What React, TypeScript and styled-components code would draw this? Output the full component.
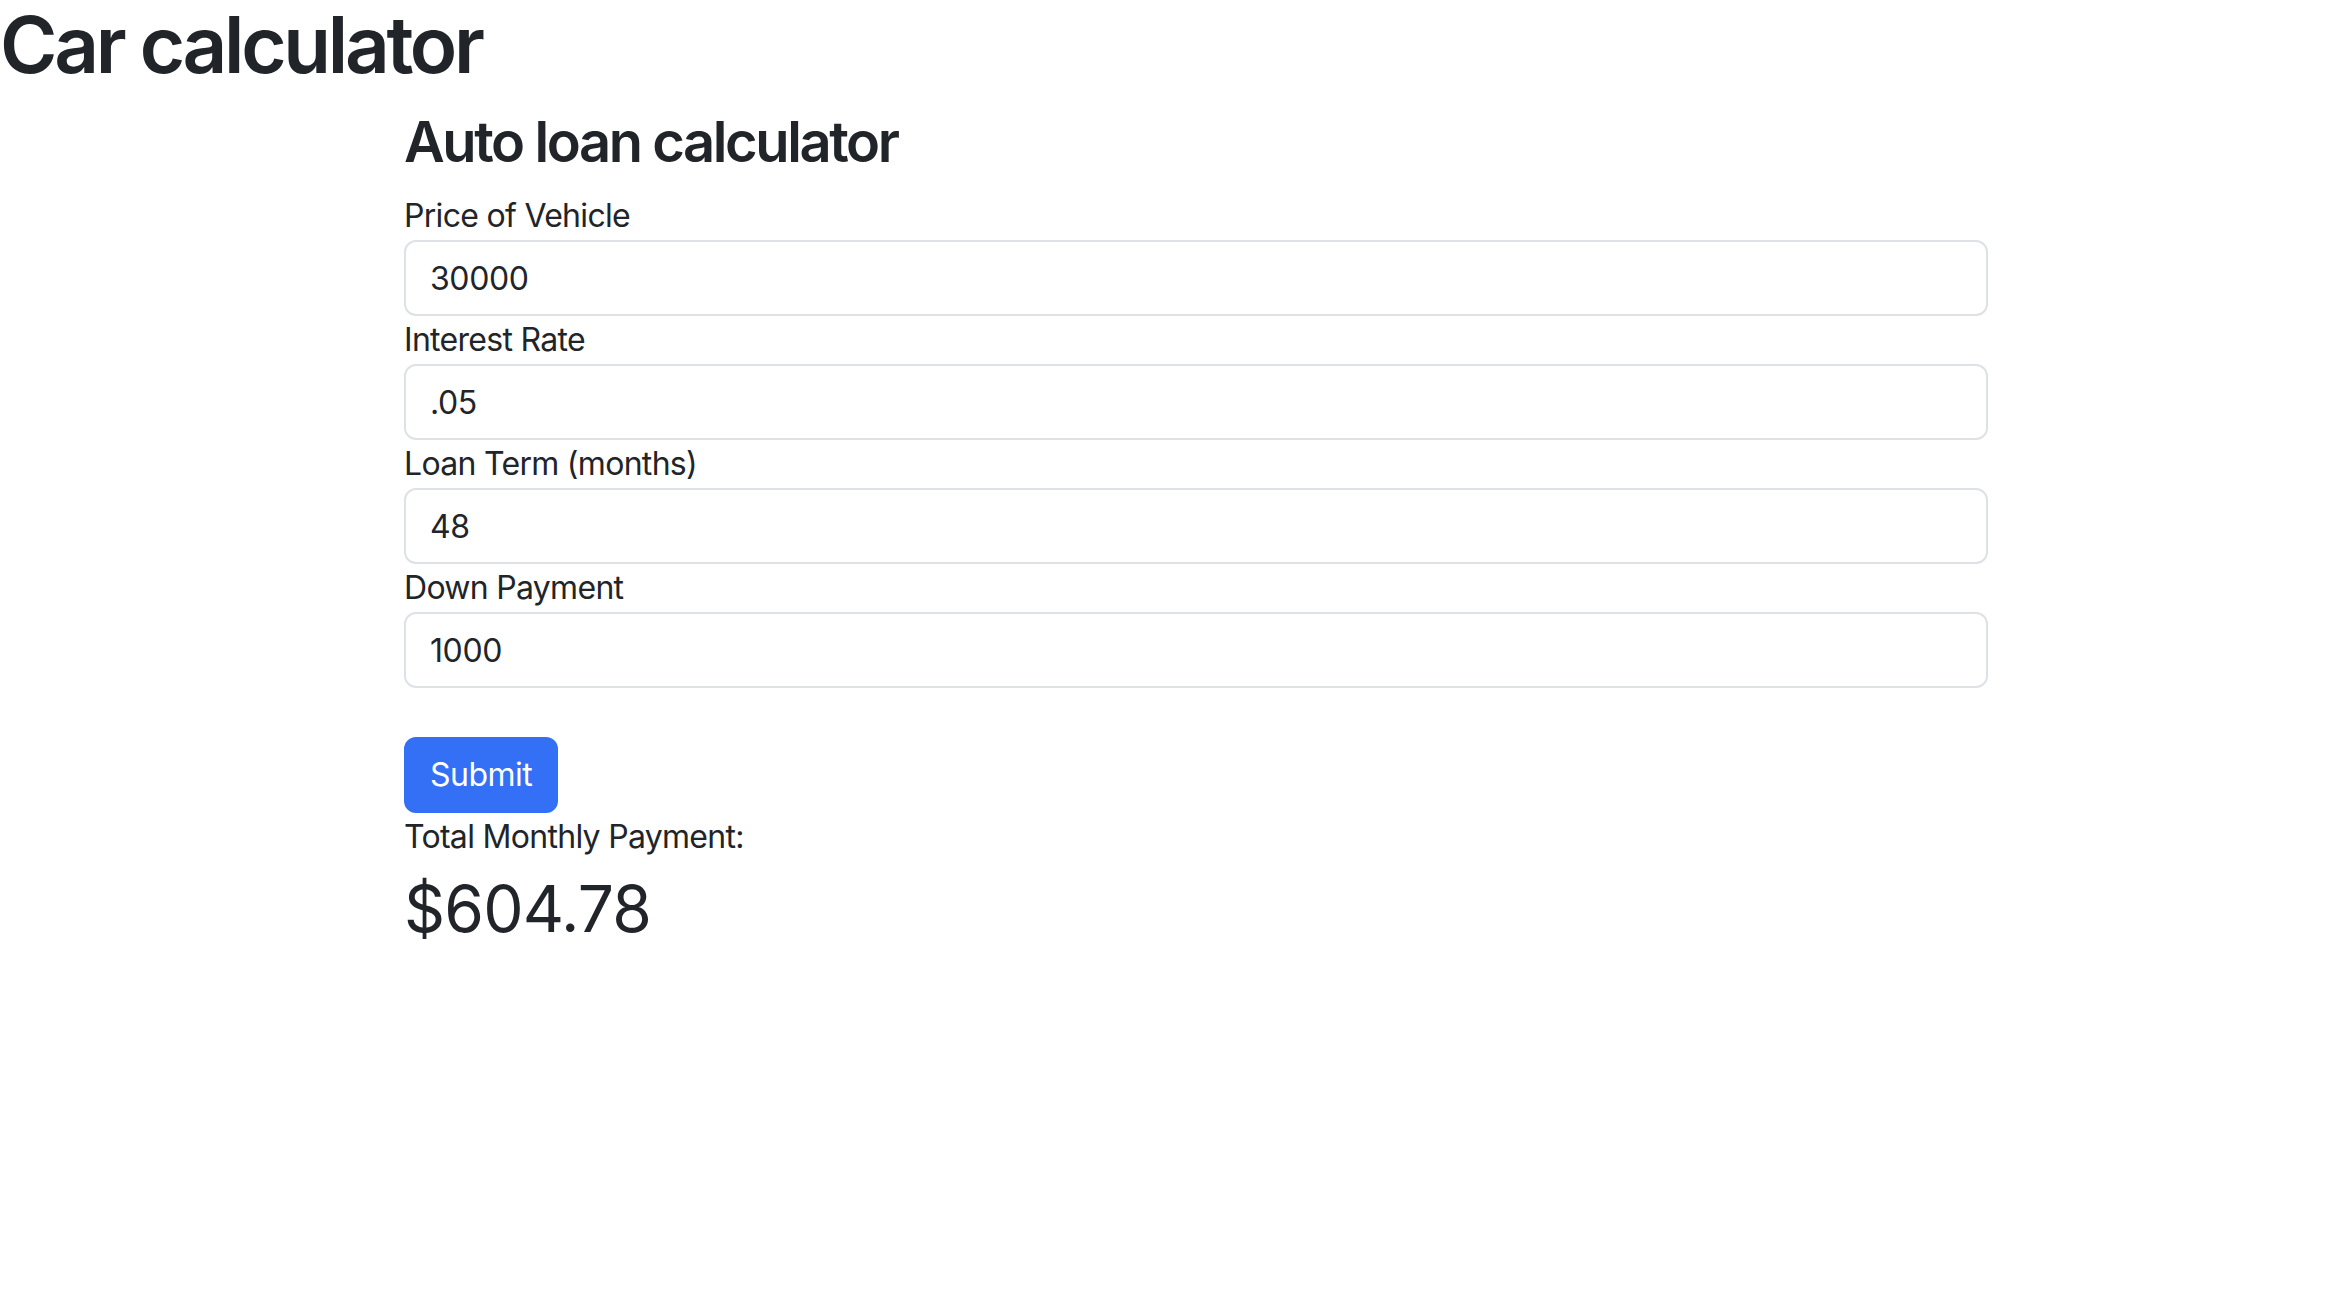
import styled, { createGlobalStyle } from "styled-components";

const GlobalStyle = createGlobalStyle`
  html, body {
    margin: 0;
    padding: 0;
    background: #ffffff;
  }
  body {
    font-family: Inter, "Liberation Sans", sans-serif;
    font-size: 32px;
    line-height: 1.5;
    color: #212529;
  }
  *, *::before, *::after {
    box-sizing: border-box;
  }
`;

const PageTitle = styled.h1`
  margin: 0 0 19px;
  font-size: 78px;
  font-weight: 600;
  line-height: 90px;
  letter-spacing: -3.3px;
`;

const Container = styled.main`
  margin-left: 404px;
  width: 1584px;
`;

const FormTitle = styled.h3`
  margin: 0 0 16px;
  font-size: 56px;
  font-weight: 600;
  line-height: 1.2;
  letter-spacing: -2.4px;
`;

const Form = styled.form`
  display: flex;
  flex-direction: column;
`;

const Label = styled.label`
  display: block;
  font-size: 32px;
  line-height: 48px;
  letter-spacing: -0.7px;
`;

const Input = styled.input`
  display: block;
  width: 100%;
  height: 76px;
  padding: 12px 24px;
  font-family: inherit;
  font-size: 32px;
  line-height: 48px;
  letter-spacing: -0.4px;
  color: #212529;
  background: #ffffff;
  border: 2px solid #dee2e6;
  border-radius: 12px;
  outline: none;
`;

const SubmitButton = styled.button`
  align-self: flex-start;
  margin-top: 49px;
  height: 76px;
  padding: 12px 24px;
  font-family: inherit;
  font-size: 32px;
  line-height: 48px;
  letter-spacing: -0.5px;
  color: #ffffff;
  background: #3370f5;
  border: 2px solid #3370f5;
  border-radius: 12px;
  cursor: pointer;
`;

const ResultLabel = styled.div`
  font-size: 32px;
  line-height: 48px;
  letter-spacing: -0.7px;
`;

const ResultValue = styled.div`
  margin-top: 10px;
  font-size: 64px;
  font-weight: 400;
  line-height: 1.2;
  letter-spacing: -0.8px;
`;

type FieldProps = {
  id: string;
  label: string;
  value: string;
};

const Field = ({ id, label, value }: FieldProps) => (
  <>
    <Label htmlFor={id}>{label}</Label>
    <Input id={id} type="text" defaultValue={value} />
  </>
);

const fields: FieldProps[] = [
  { id: "price", label: "Price of Vehicle", value: "30000" },
  { id: "rate", label: "Interest Rate", value: ".05" },
  { id: "term", label: "Loan Term (months)", value: "48" },
  { id: "down", label: "Down Payment", value: "1000" },
];

const App = () => {
  return (
    <>
      <GlobalStyle />
      <PageTitle>Car calculator</PageTitle>
      <Container>
        <FormTitle>Auto loan calculator</FormTitle>
        <Form onSubmit={(e) => e.preventDefault()}>
          {fields.map((field) => (
            <Field key={field.id} {...field} />
          ))}
          <SubmitButton type="submit">Submit</SubmitButton>
        </Form>
        <ResultLabel>Total Monthly Payment:</ResultLabel>
        <ResultValue>$604.78</ResultValue>
      </Container>
    </>
  );
};

export default App;
